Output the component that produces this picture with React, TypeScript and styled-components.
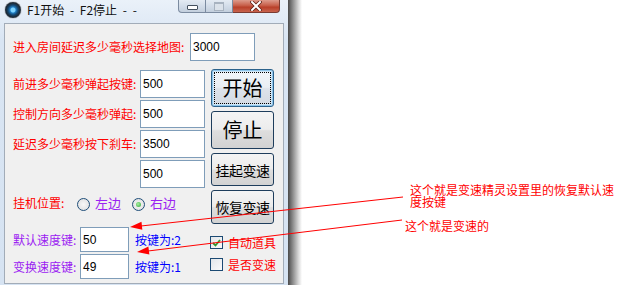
import React from "react";
import styled, { createGlobalStyle, css } from "styled-components";

const Global = createGlobalStyle`
  html, body { margin: 0; padding: 0; background: #ffffff; overflow: hidden; }
  body { font-family: "Noto Sans CJK SC", "Noto Sans", sans-serif; }
`;

const CJK = `"Noto Sans CJK SC", "Noto Sans", sans-serif`;

const Page = styled.div`
  position: relative;
  width: 619px;
  height: 285px;
  display: flex;
  background: #ffffff;
`;

const Window = styled.div`
  width: 288px;
  height: 285px;
  display: flex;
  flex-direction: column;
  background: linear-gradient(#eaf1f9, #d9e5f3 40px, #d6e3f2);
  box-sizing: border-box;
`;

const Shadow = styled.div`
  width: 14px;
  height: 285px;
  background: linear-gradient(to right, #4a4a4a, #8d8d8d 35%, #d8d8d8 75%, #ffffff);
`;

const TitleBar = styled.div`
  height: 22px;
  display: flex;
  align-items: flex-start;
  padding: 0 8px 0 5px;
  box-sizing: border-box;
`;

const AppIcon = styled.div`
  width: 16px;
  height: 16px;
  margin-top: 2px;
  border-radius: 50%;
  background: radial-gradient(circle at 50% 50%, #7fd4ff 0 2px, #1f7fc4 3px, #14456e 5px, #1c2a36 7px, #2a3440 8px);
  box-shadow: 0 0 1px #000;
`;

const TitleText = styled.div`
  margin-left: 6px;
  margin-top: 2px;
  font: 12px/16px ${CJK};
  color: #111;
  white-space: pre;
  word-spacing: 3px;
`;

const CaptionButtons = styled.div`
  margin-left: auto;
  display: flex;
`;

const CapBtn = styled.div<{ $w: number; $kind?: "close" }>`
  width: ${(p) => p.$w}px;
  height: 13px;
  box-sizing: border-box;
  border: 1px solid #7b8ba0;
  border-top: none;
  display: flex;
  align-items: center;
  justify-content: center;
  background: linear-gradient(#e4ebf3, #d3dde9 50%, #c3cfdd);
  &:first-child { border-bottom-left-radius: 4px; }
  & + & { border-left: none; }
  ${(p) =>
    p.$kind === "close" &&
    css`
      border-color: #7a3b32;
      border-bottom-right-radius: 4px;
      background: linear-gradient(#dd9b8c, #c8604b 45%, #b9402a 60%, #c8644e);
    `}
`;

const MinGlyph = styled.div`
  width: 9px;
  height: 3px;
  margin-top: 3px;
  background: #fff;
  border: 1px solid #44505e;
  border-radius: 1px;
`;

const MaxGlyph = styled.div`
  width: 8px;
  height: 6px;
  border: 1px solid #a8b3c0;
  border-top-width: 2px;
  background: #dbe2ea;
`;

const Client = styled.div`
  margin: 1px 4px 0 4px;
  height: 261px;
  border: 1px solid #a2acb8;
  background: #f0f0f0;
  box-sizing: border-box;
  padding: 9px 0 0 8px;
  display: flex;
  flex-direction: column;
`;

const TopRow = styled.div`
  display: flex;
  align-items: center;
  height: 28px;
`;

const Label = styled.div<{ $w?: number; $color?: string; $size?: number }>`
  ${(p) => (p.$w ? `width: ${p.$w}px;` : "")}
  flex-shrink: 0;
  font: ${(p) => p.$size ?? 12}px/14px ${CJK};
  color: ${(p) => p.$color ?? "#ff0000"};
  white-space: nowrap;
`;

const TextBox = styled.div<{ $w: number; $h: number }>`
  width: ${(p) => p.$w}px;
  height: ${(p) => p.$h}px;
  box-sizing: border-box;
  border: 1px solid #7f9db9;
  background: #ffffff;
  font: 12px/1 "Liberation Sans", Arial, sans-serif;
  color: #000;
  display: flex;
  align-items: center;
  padding-left: 2px;
  flex-shrink: 0;
`;

const Body = styled.div`
  margin-top: 8px;
  display: flex;
  gap: 6px;
`;

const LeftCol = styled.div`
  width: 192px;
  padding-top: 1px;
  display: flex;
  flex-direction: column;
`;

const FieldStack = styled.div`
  display: flex;
  flex-direction: column;
  gap: 2px;
`;

const FieldRow = styled.div`
  display: flex;
  align-items: center;
  height: 28px;
`;

const RadioRow = styled.div`
  margin-top: 4px;
  height: 22px;
  display: flex;
  align-items: center;
`;

const RadioCircle = styled.div<{ $checked?: boolean }>`
  width: 13px;
  height: 13px;
  box-sizing: border-box;
  border-radius: 50%;
  border: 1px solid #1f4e79;
  background: radial-gradient(circle, #f8f8f8, #dcdcdc);
  display: flex;
  align-items: center;
  justify-content: center;
  flex-shrink: 0;
  margin-top: 2px;
  &::after {
    content: "";
    display: ${(p) => (p.$checked ? "block" : "none")};
    width: 5px;
    height: 5px;
    border-radius: 50%;
    background: radial-gradient(circle at 40% 40%, #a8f0a0, #2fa53a);
  }
`;

const RadioOption = styled.div<{ $ml: number }>`
  display: flex;
  align-items: center;
  gap: 5px;
  margin-left: ${(p) => p.$ml}px;
`;

const KeyStack = styled.div`
  margin-top: 13px;
  display: flex;
  flex-direction: column;
  gap: 2px;
`;

const KeyRow = styled.div`
  display: flex;
  align-items: center;
  height: 25px;
`;

const KeyHint = styled.div`
  margin-left: 6px;
  font: 12px/14px ${CJK};
  color: #0000ff;
  white-space: nowrap;
  margin-top: 1px;
`;

const RightCol = styled.div`
  width: 63px;
  display: flex;
  flex-direction: column;
`;

const ButtonStack = styled.div`
  display: flex;
  flex-direction: column;
  gap: 4px;
`;

const PushButton = styled.div<{ $h: number; $size: number; $default?: boolean }>`
  position: relative;
  height: ${(p) => p.$h}px;
  box-sizing: border-box;
  border: 1px solid #1e3d5c;
  border-radius: 3px;
  background: linear-gradient(#f4f4f4, #ececec 48%, #dedede 52%, #d2d2d2);
  display: flex;
  align-items: center;
  justify-content: center;
  font: ${(p) => p.$size}px/1 ${CJK};
  color: #000;
  white-space: nowrap;
  letter-spacing: ${(p) => (p.$size > 16 ? 0 : -0.5)}px;
  ${(p) =>
    p.$default &&
    css`
      border-color: #2c628b;
      box-shadow: inset 0 0 0 1px #8fc6ec, inset 0 0 0 2px #cfe6f6;
      background: linear-gradient(#f2f6fa, #e9eef3 48%, #dde3ea 52%, #d3dae2);
      &::after {
        content: "";
        position: absolute;
        inset: 2px;
        border: 1px dotted #000;
        border-radius: 1px;
      }
    `}
`;

const CheckStack = styled.div`
  margin-top: 12px;
  margin-left: -1px;
  display: flex;
  flex-direction: column;
  gap: 9px;
`;

const CheckRow = styled.div`
  display: flex;
  align-items: center;
  gap: 5px;
  height: 13px;
`;

const CheckBox = styled.div`
  width: 13px;
  height: 13px;
  box-sizing: border-box;
  border: 1px solid #1c4a73;
  background: linear-gradient(135deg, #e2e6ea, #fafafa);
  display: flex;
  align-items: center;
  justify-content: center;
  flex-shrink: 0;
`;

const Note = styled.div<{ $x: number; $y: number; $w: number }>`
  position: absolute;
  left: ${(p) => p.$x}px;
  top: ${(p) => p.$y}px;
  width: ${(p) => p.$w}px;
  font: 12px/12px ${CJK};
  color: #ff0000;
`;

const Overlay = styled.svg`
  position: absolute;
  left: 0;
  top: 0;
  pointer-events: none;
`;

export default function App() {
  return (
    <Page>
      <Global />
      <Window>
        <TitleBar>
          <AppIcon />
          <TitleText>{"F1开始 - F2停止 - -"}</TitleText>
          <CaptionButtons>
            <CapBtn $w={28}>
              <MinGlyph />
            </CapBtn>
            <CapBtn $w={27}>
              <MaxGlyph />
            </CapBtn>
            <CapBtn $w={47} $kind="close">
              <svg width="12" height="10" viewBox="0 0 12 10">
                <path d="M2 1 L10 9 M10 1 L2 9" stroke="#5a1c12" strokeWidth="3.4" strokeLinecap="square" />
                <path d="M2 1 L10 9 M10 1 L2 9" stroke="#ffffff" strokeWidth="2" strokeLinecap="square" />
              </svg>
            </CapBtn>
          </CaptionButtons>
        </TitleBar>
        <Client>
          <TopRow>
            <Label $w={177}>进入房间延迟多少毫秒选择地图:</Label>
            <TextBox $w={65} $h={28}>3000</TextBox>
          </TopRow>
          <Body>
            <LeftCol>
              <FieldStack>
                <FieldRow>
                  <Label $w={127}>前进多少毫秒弹起按键:</Label>
                  <TextBox $w={65} $h={28}>500</TextBox>
                </FieldRow>
                <FieldRow>
                  <Label $w={127}>控制方向多少毫秒弹起:</Label>
                  <TextBox $w={65} $h={28}>500</TextBox>
                </FieldRow>
                <FieldRow>
                  <Label $w={127}>延迟多少毫秒按下刹车:</Label>
                  <TextBox $w={65} $h={28}>3500</TextBox>
                </FieldRow>
                <FieldRow>
                  <Label $w={127} />
                  <TextBox $w={65} $h={28}>500</TextBox>
                </FieldRow>
              </FieldStack>
              <RadioRow>
                <Label $w={59}>挂机位置:</Label>
                <RadioOption $ml={5}>
                  <RadioCircle />
                  <Label $color="#9b22f2" $size={13}>左边</Label>
                </RadioOption>
                <RadioOption $ml={11}>
                  <RadioCircle $checked />
                  <Label $color="#9b22f2" $size={13}>右边</Label>
                </RadioOption>
              </RadioRow>
              <KeyStack>
                <KeyRow>
                  <Label $w={67} $color="#9b22f2">默认速度键:</Label>
                  <TextBox $w={49} $h={25}>50</TextBox>
                  <KeyHint>按键为:2</KeyHint>
                </KeyRow>
                <KeyRow>
                  <Label $w={67} $color="#9b22f2">变换速度键:</Label>
                  <TextBox $w={49} $h={25}>49</TextBox>
                  <KeyHint>按键为:1</KeyHint>
                </KeyRow>
              </KeyStack>
            </LeftCol>
            <RightCol>
              <ButtonStack>
                <PushButton $h={38} $size={20} $default>开始</PushButton>
                <PushButton $h={38} $size={20}>停止</PushButton>
                <PushButton $h={33} $size={14}>挂起变速</PushButton>
                <PushButton $h={34} $size={14}>恢复变速</PushButton>
              </ButtonStack>
              <CheckStack>
                <CheckRow>
                  <CheckBox>
                    <svg width="9" height="8" viewBox="0 0 9 8">
                      <path d="M1 4 L3.5 6.5 L8 1" fill="none" stroke="#2f9a2f" strokeWidth="1.8" />
                    </svg>
                  </CheckBox>
                  <Label>自动道具</Label>
                </CheckRow>
                <CheckRow>
                  <CheckBox />
                  <Label>是否变速</Label>
                </CheckRow>
              </CheckStack>
            </RightCol>
          </Body>
        </Client>
      </Window>
      <Shadow />
      <Note $x={410} $y={184} $w={206}>这个就是变速精灵设置里的恢复默认速度按键</Note>
      <Note $x={405} $y={220} $w={120}>这个就是变速的</Note>
      <Overlay width="619" height="285" viewBox="0 0 619 285">
        <line x1="403" y1="197" x2="141" y2="226" stroke="#ff0000" strokeWidth="1" />
        <polygon points="130,227 142.3,229.7 141.5,221.7" fill="#ff0000" />
        <line x1="402" y1="220" x2="148" y2="251" stroke="#ff0000" strokeWidth="1" />
        <polygon points="137,252 149.4,254.6 148.4,246.6" fill="#ff0000" />
      </Overlay>
    </Page>
  );
}
